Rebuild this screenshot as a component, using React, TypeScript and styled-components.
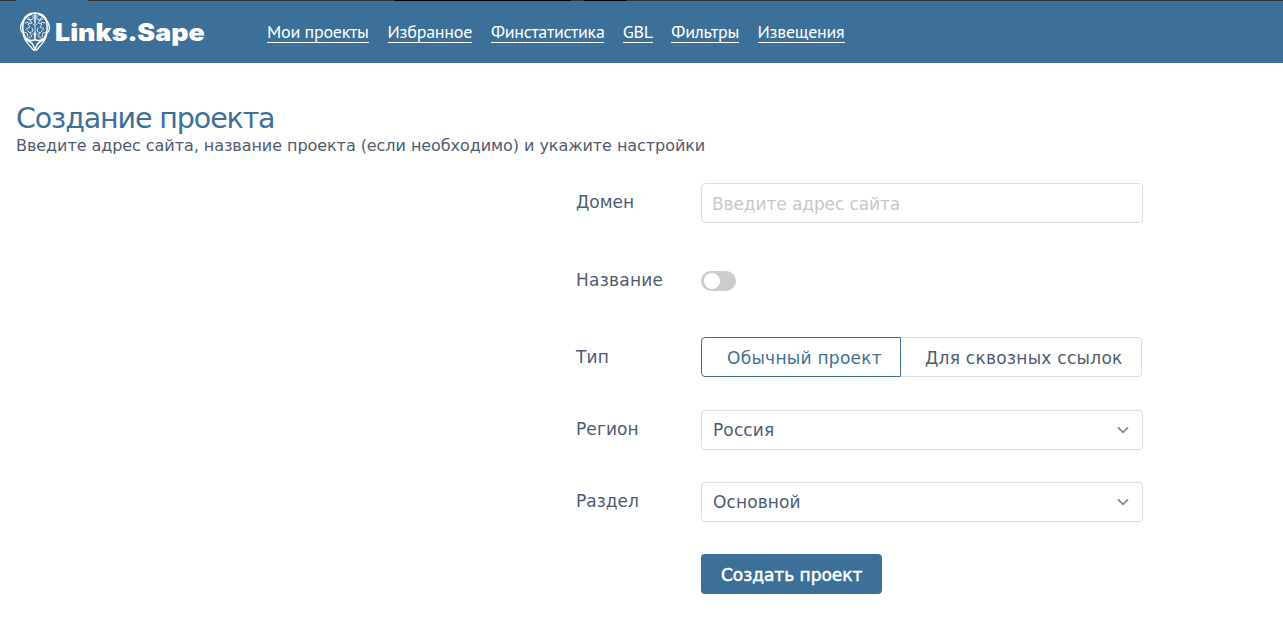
import React from "react";
import styled, { createGlobalStyle } from "styled-components";

const blue = "#3d7099";
const ink = "#4f5b73";
const line = "#dcdee2";

const Global = createGlobalStyle`
  * { box-sizing: border-box; }
  body { margin: 0; background: #fff; color: ${ink}; font-family: Verdana, "DejaVu Sans", sans-serif; }
`;

const Page = styled.div`
  height: 634px;
  overflow: hidden;
`;

const TopEdge = styled.div`
  height: 1px;
  background: linear-gradient(90deg, #333 16px, ${blue} 16px 88px, #333 88px 395px, #000 395px 571px, #333 571px 584px, #000 584px 626px, #333 626px);
`;

const Header = styled.header`
  height: 62px;
  background: ${blue};
  display: flex;
  align-items: flex-start;
  padding-left: 20px;
`;

const Brand = styled.a`
  display: flex;
  width: 247px;
  padding-top: 11px;
  color: #fff;
`;

const BrandName = styled.span`
  font: 900 24px/41px "Arial Black", Inter, sans-serif;
  margin-left: 5px;
  transform: scaleX(1.115);
  transform-origin: left;
`;

const Nav = styled.nav`
  display: flex;
  gap: 18.6px;
  padding-top: 19px;
`;

const NavLink = styled.a<{ $w: number }>`
  width: ${(p) => p.$w}px;
  height: 23px;
  color: #fff;
  white-space: nowrap;
  border-bottom: 1px solid #fff;
  font: 18px/24px "PT Sans", "Noto Sans", sans-serif;
  letter-spacing: -0.25px;
`;

const Main = styled.main`
  padding: 39px 0 0 16px;
`;

const Title = styled.h1`
  margin: 0;
  font-size: 28.5px;
  line-height: 34px;
  font-weight: 400;
  letter-spacing: -1.12px;
  color: ${blue};
  white-space: nowrap;
`;

const Subtitle = styled.p`
  margin: 0;
  font-size: 16px;
  line-height: 20px;
  letter-spacing: -0.06px;
  white-space: nowrap;
`;

const Form = styled.form`
  padding: 27px 0 0 560px;
`;

const Row = styled.div<{ $h: number }>`
  display: flex;
  height: ${(p) => p.$h}px;
`;

const Label = styled.label<{ $ls?: number; $h?: number }>`
  width: 125px;
  font-size: 17px;
  line-height: ${(p) => p.$h ?? 38}px;
  letter-spacing: ${(p) => p.$ls ?? 0}px;
`;

const TextInput = styled.input`
  width: 442px;
  height: 40px;
  border: 1px solid ${line};
  border-radius: 4px;
  padding: 1px 10px 0;
  font: 17px "DejaVu Sans", sans-serif;
  letter-spacing: -0.1px;
  outline: 0;
  &::placeholder { color: #c5c8ce; opacity: 1; }
`;

const Toggle = styled.button`
  width: 35px;
  height: 20px;
  margin: 10px 0 0;
  padding: 2px 2.5px;
  border: 0;
  border-radius: 10px;
  background: #ccc;
`;

const Knob = styled.span`
  display: block;
  width: 16px;
  height: 16px;
  border-radius: 50%;
  background: #fff;
`;

const Segment = styled.button<{ $active?: boolean; $w: number }>`
  width: ${(p) => p.$w}px;
  height: 40px;
  padding: 1px 0 0 ${(p) => (p.$active ? 25 : 24)}px;
  text-align: left;
  white-space: nowrap;
  background: #fff;
  border: 1px solid ${(p) => (p.$active ? blue : line)};
  border-left-width: ${(p) => (p.$active ? 1 : 0)}px;
  border-radius: ${(p) => (p.$active ? "4px 0 0 4px" : "0 4px 4px 0")};
  color: ${(p) => (p.$active ? blue : ink)};
  font: 17px "DejaVu Sans", sans-serif;
  letter-spacing: 0.27px;
`;

const Select = styled.div`
  width: 442px;
  height: 40px;
  display: flex;
  align-items: center;
  justify-content: space-between;
  padding: 0 13px 0 11px;
  border: 1px solid ${line};
  border-radius: 4px;
  font-size: 17px;
  letter-spacing: 0.12px;
`;

const Submit = styled.button`
  width: 181px;
  height: 40px;
  margin-left: 125px;
  padding: 1px 0 0 20px;
  text-align: left;
  white-space: nowrap;
  border: 0;
  border-radius: 4px;
  background: ${blue};
  color: #fff;
  font: 17px "DejaVu Sans", sans-serif;
  letter-spacing: -0.03px;
  -webkit-text-stroke: 0.5px #fff;
`;

const Logo = () => (
  <svg width="30" height="39" viewBox="0 0 30 39" fill="none" stroke="#fff" strokeLinecap="round" strokeLinejoin="round">
    <path strokeWidth="1.300" d="M15 1C9.500 1 5 3.500 3 9c-1.600 2-2.700 5-2.300 8 .3 2 1 3.500 2.300 4 .5 5 3.500 9.500 7 13l3.500 4h3l3.500-4c3.500-3.500 6.500-8 7-13 1.300-.5 2-2 2.300-4 .4-3-.7-6-2.300-8C25 3.500 20.500 1 15 1z" />
    <path strokeWidth="1.500" d="M15 1v10M15 20v8M11 2.500C6 4 3.500 8 3 12c-.6 5-.4 10 3 14 2.500 2.500 6 3 9 1.500 3 1.500 6.500 1 9-1.500 3.400-4 3.600-9 3-14-.5-4-3-8-8-9.500" />
    <path strokeWidth="1.500" d="M4.500 26c2.500 3 6 3.500 8 6l2.500 5 2.500-5c2-2.500 5.500-3 8-6" />
    <path strokeWidth=".8" d="M13 3v4l-3 1 2 3-4 1 2 3-4 2M17 3v4l3 1-2 3 4 1-2 3 4 2M5 11l4-1M25 11l-4-1M8 5l2 3M22 5l-2 3M13 12l2 1.500 2-1.500M15 13.500v5M12 16l1 3-3 2 2 3-3 2M18 16l-1 3 3 2-2 3 3 2M4 20l3 1 1 4M26 20l-3 1-1 4M7 7l3 1M23 7l-3 1M7 18l3 3M23 18l-3 3M13 22l2 1 2-1" />
  </svg>
);

const Chevron = () => (
  <svg width="12" height="8" viewBox="0 0 12 8" fill="none" stroke="#808695" strokeWidth="1.7">
    <path d="M1 1.300l5 5 5-5" />
  </svg>
);

const links = [
  { text: "Мои проекты", w: 102 },
  { text: "Избранное", w: 84.8 },
  { text: "Финстатистика", w: 113.2 },
  { text: "GBL", w: 30 },
  { text: "Фильтры", w: 67.6 },
  { text: "Извещения", w: 87 },
];

export default function App() {
  return (
    <Page>
      <Global />
      <TopEdge />
      <Header>
        <Brand>
          <Logo />
          <BrandName>Links.Sape</BrandName>
        </Brand>
        <Nav>
          {links.map((l) => (
            <NavLink key={l.text} $w={l.w}>{l.text}</NavLink>
          ))}
        </Nav>
      </Header>
      <Main>
        <Title>Создание проекта</Title>
        <Subtitle>Введите адрес сайта, название проекта (если необходимо) и укажите настройки</Subtitle>
        <Form>
          <Row $h={78}>
            <Label>Домен</Label>
            <TextInput placeholder="Введите адрес сайта" />
          </Row>
          <Row $h={76}>
            <Label $ls={0.25}>Название</Label>
            <Toggle type="button"><Knob /></Toggle>
          </Row>
          <Row $h={73}>
            <Label $h={40} $ls={0.2}>Тип</Label>
            <Segment type="button" $active $w={200}>Обычный проект</Segment>
            <Segment type="button" $w={241}>Для сквозных ссылок</Segment>
          </Row>
          <Row $h={72}>
            <Label $ls={0.1}>Регион</Label>
            <Select>Россия<Chevron /></Select>
          </Row>
          <Row $h={72}>
            <Label>Раздел</Label>
            <Select>Основной<Chevron /></Select>
          </Row>
          <Submit type="button">Создать проект</Submit>
        </Form>
      </Main>
    </Page>
  );
}
